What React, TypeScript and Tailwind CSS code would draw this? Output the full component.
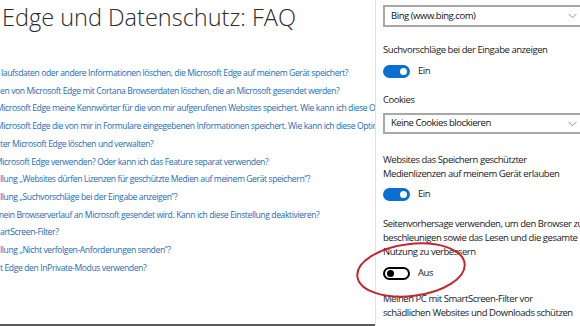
import React from "react";

const links: { text: string; shift: string }[] = [
  { text: "laufsdaten oder andere Informationen löschen, die Microsoft Edge auf meinem Gerät speichert?", shift: "ml-[1px]" },
  { text: "en von Microsoft Edge mit Cortana Browserdaten löschen, die an Microsoft gesendet werden?", shift: "ml-0" },
  { text: "Microsoft Edge meine Kennwörter für die von mir aufgerufenen Websites speichert. Wie kann ich diese Option deaktivieren?", shift: "ml-[-4px]" },
  { text: "Microsoft Edge die von mir in Formulare eingegebenen Informationen speichert. Wie kann ich diese Option deaktivieren?", shift: "ml-[-4px]" },
  { text: "ter Microsoft Edge löschen und verwalten?", shift: "ml-0" },
  { text: "Microsoft Edge verwenden? Oder kann ich das Feature separat verwenden?", shift: "ml-[-5px]" },
  { text: "llung „Websites dürfen Lizenzen für geschützte Medien auf meinem Gerät speichern“?", shift: "ml-0" },
  { text: "llung „Suchvorschläge bei der Eingabe anzeigen“?", shift: "ml-0" },
  { text: "mein Browserverlauf an Microsoft gesendet wird. Kann ich diese Einstellung deaktivieren?", shift: "ml-[-4px]" },
  { text: "artScreen-Filter?", shift: "ml-0" },
  { text: "llung „Nicht verfolgen-Anforderungen senden“?", shift: "ml-0" },
  { text: "t Edge den InPrivate-Modus verwenden?", shift: "ml-0" },
];

function Toggle({ on }: { on: boolean }) {
  if (on) {
    return (
      <div className="w-[27px] h-[13px] rounded-full bg-[#0a6fd0] flex items-center justify-end pr-[3px]">
        <div className="w-[7px] h-[7px] rounded-full bg-white" />
      </div>
    );
  }
  return (
    <div className="w-[27px] h-[13px] rounded-full border-2 border-black bg-white flex items-center pl-[2px]">
      <div className="w-[7px] h-[7px] rounded-full bg-black" />
    </div>
  );
}

function Select({ value, className }: { value: string; className: string }) {
  return (
    <div className={`${className} mr-[-10px] border-2 border-[#a8a8a8] flex items-center justify-between pl-[6px] pr-[14px] text-[#111]`}>
      <span>{value}</span>
      <svg width="9" height="6" viewBox="0 0 9 6" fill="none">
        <path d="M0.5 0.8 L4.5 4.8 L8.5 0.8" stroke="#9a9a9a" strokeWidth="1" />
      </svg>
    </div>
  );
}

export default function App() {
  return (
    <div
      className="relative w-[580px] h-[326px] overflow-hidden bg-white flex"
      style={{ fontFamily: '"Open Sans", "Noto Sans", sans-serif' }}
    >
      <div className="w-[375px] shrink-0 overflow-hidden border-b-2 border-[#5a5a5a] flex flex-col">
        <h1 className="pl-[2px] mt-[1px] text-[23.5px] leading-[32px] font-light text-[#2b2b2b] whitespace-nowrap">
          Edge und Datenschutz: FAQ
        </h1>
        <ul className="mt-[32px] text-[8.6px] tracking-[-0.4px] leading-[17.7px] text-[#1d6db5] whitespace-nowrap">
          {links.map((l, i) => (
            <li key={i} className={l.shift}>
              {l.text}
            </li>
          ))}
        </ul>
      </div>

      <div className="flex-1 border-l border-[#e2e2e2] pl-[7px] flex flex-col text-[9.5px] tracking-[-0.45px] text-[#1a1a1a] whitespace-nowrap">
        <Select value="Bing (www.bing.com)" className="mt-[5px] h-[22px]" />
        <div className="mt-[16px] leading-[14px]">Suchvorschläge bei der Eingabe anzeigen</div>
        <div className="mt-[7px] h-[14px] flex items-center gap-[8px]">
          <Toggle on />
          <span>Ein</span>
        </div>
        <div className="mt-[15px] leading-[14px]">Cookies</div>
        <Select value="Keine Cookies blockieren" className="mt-[6px] h-[21px]" />
        <div className="mt-[19px] leading-[13.5px]">
          Websites das Speichern geschützter
          <br />
          Medienlizenzen auf meinem Gerät erlauben
        </div>
        <div className="mt-[7px] h-[14px] flex items-center gap-[8px]">
          <Toggle on />
          <span>Ein</span>
        </div>
        <div className="mt-[16px] leading-[14px]">
          Seitenvorhersage verwenden, um den Browser zu
          <br />
          beschleunigen sowie das Lesen und die gesamte
          <br />
          Nutzung zu verbessern
        </div>
        <div className="mt-[7px] h-[14px] flex items-center gap-[8px]">
          <Toggle on={false} />
          <span>Aus</span>
        </div>
        <div className="mt-[12px] leading-[14px]">
          Meinen PC mit SmartScreen-Filter vor
          <br />
          schädlichen Websites und Downloads schützen
        </div>
      </div>

      <svg className="absolute left-0 top-0 pointer-events-none" width="580" height="326">
        <ellipse cx="411" cy="270" rx="54" ry="26" fill="none" stroke="#c4262e" strokeWidth="2" transform="rotate(-7 411 270)" />
      </svg>
    </div>
  );
}
